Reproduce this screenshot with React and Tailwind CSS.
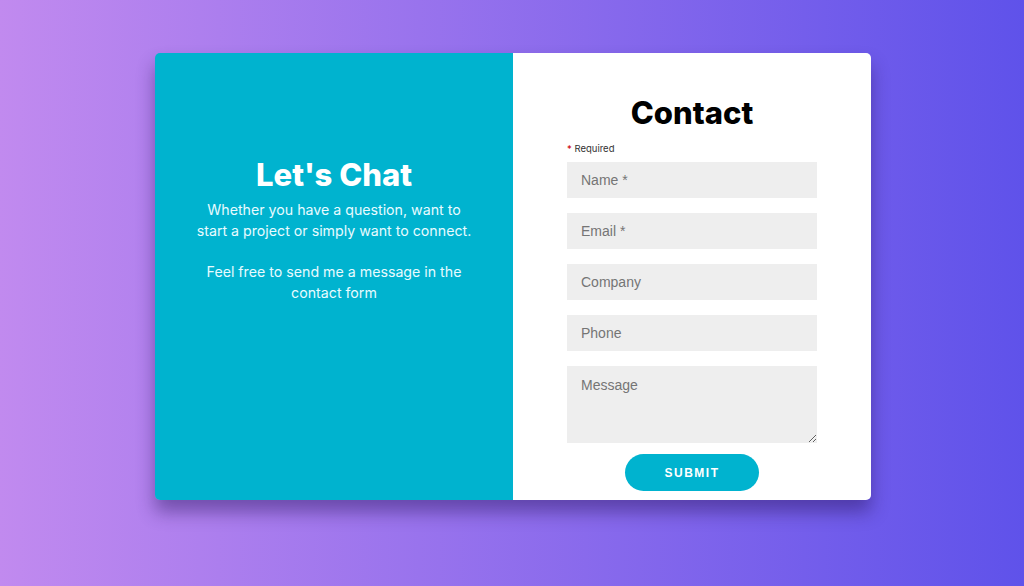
import React from "react";

const heading = { fontFamily: "Inter, 'Noto Sans', sans-serif" };

function Field({ placeholder }) {
  return (
    <input
      className="w-full h-[36px] bg-[#eeeeee] px-[14px] text-[14px] text-[#333] placeholder:text-[#757575] outline-none font-['Liberation_Sans',Arial,sans-serif]"
      placeholder={placeholder}
    />
  );
}

export default function App() {
  return (
    <div className="w-full min-h-[586px] bg-[linear-gradient(to_right,#c18aef,#5f52ea)] flex justify-center pt-[53px] pl-[2px]">
      <div className="w-[716px] h-[447px] flex rounded-[5px] overflow-hidden shadow-[0_12px_18px_rgba(40,20,90,0.45)]">
        {/* left side */}
        <div className="w-[358px] bg-[#00b3cf] text-white flex flex-col items-center pt-[102px] text-center" style={heading}>
          <h1 className="text-[31px] font-extrabold leading-[40px]">Let's Chat</h1>
          <p className="mt-[4px] text-[14.2px] leading-[21px] text-[#e8fbff]">
            Whether you have a question, want to
            <br />
            start a project or simply want to connect.
          </p>
          <p className="mt-[20px] text-[14.2px] leading-[21px] text-[#e8fbff]">
            Feel free to send me a message in the
            <br />
            contact form
          </p>
        </div>

        {/* right side */}
        <div className="w-[358px] bg-white flex flex-col items-center pt-[40px]">
          <h2 className="text-[31px] font-extrabold leading-[40px] text-black" style={heading}>Contact</h2>
          <div className="w-[250px] mt-[10px]">
            <div className="text-[9.5px] leading-[12px] text-[#333] mb-[7px]" style={heading}>
              <span className="text-[#c00]">*</span> Required
            </div>
            <div className="flex flex-col gap-[15px]">
              <Field placeholder="Name *" />
              <Field placeholder="Email *" />
              <Field placeholder="Company" />
              <Field placeholder="Phone" />
              <textarea
                className="block w-full h-[77px] bg-[#eeeeee] px-[14px] py-[9px] text-[14px] placeholder:text-[#757575] outline-none font-['Liberation_Sans',Arial,sans-serif]"
                placeholder="Message"
              />
            </div>
          </div>
          <button className="mt-[11px] w-[134px] h-[37px] rounded-full bg-[#00b3cf] text-white text-[12px] font-bold tracking-[1.5px] font-['Liberation_Sans',Arial,sans-serif]">
            SUBMIT
          </button>
        </div>
      </div>
    </div>
  );
}
